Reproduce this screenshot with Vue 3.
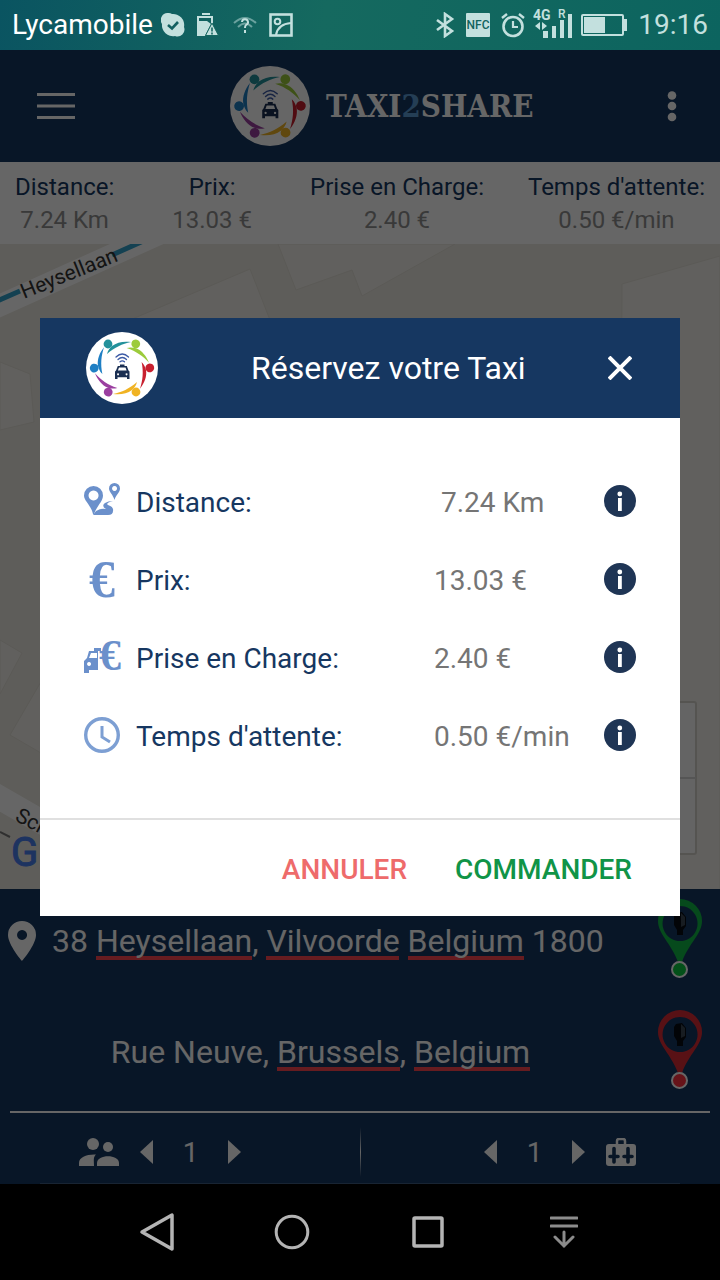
<script setup>
import { ref, onMounted } from 'vue';

// --- DONNÉES DE LA COURSE ---
const fares = [
    { id: 'distance', label: 'Distance:', value: '7.24 Km', detail: ' 7.24 Km' },
    { id: 'price', label: 'Prix:', value: '13.03 €', detail: '13.03 €' },
    { id: 'pickup', label: 'Prise en Charge:', value: '2.40 €', detail: '2.40 €' },
    { id: 'waiting', label: "Temps d'attente:", value: '0.50 €/min', detail: '0.50 €/min' },
];

const stops = ref([
    { id: 'from', label: 'Départ', text: '38 Heysellaan, Vilvoorde Belgium 1800', color: '#10b848', dot: '#08c840' },
    { id: 'to', label: 'Arrivée', text: 'Rue Neuve, Brussels, Belgium', color: '#dc2c36', dot: '#ff3040' },
]);

const UNKNOWN_WORDS = ['Heysellaan', 'Vilvoorde', 'Brussels', 'Belgium'];
const LOGO_COLORS = ['#23919b', '#9ccb3b', '#c8202f', '#f0b323', '#9b3fa0', '#1f7fc4'];

const passengers = ref(1);
const bags = ref(1);
const showModal = ref(true);

// --- SOULIGNEMENT DES MOTS INCONNUS ---
const inputs = ref([]);
const underlines = ref({});

const updateUnderlines = () => {
    const ctx = document.createElement('canvas').getContext('2d');
    stops.value.forEach((stop, i) => {
        const el = inputs.value[i];
        const css = getComputedStyle(el);
        ctx.font = `${css.fontSize} Roboto`;
        const total = ctx.measureText(stop.text).width;
        const start = css.textAlign === 'center' ? (el.clientWidth - total) / 2 : 0;
        const marks = UNKNOWN_WORDS.filter((w) => stop.text.includes(w)).map((w) => ({
            x: Math.round(start + ctx.measureText(stop.text.slice(0, stop.text.indexOf(w))).width),
            w: Math.round(ctx.measureText(w).width),
        }));
        underlines.value[stop.id] = {
            backgroundImage: marks.map(() => 'linear-gradient(#ff4650, #ff4650)').join(', ') || 'none',
            backgroundPosition: marks.map((m) => `${m.x}px 39px`).join(', '),
            backgroundSize: marks.map((m) => `${m.w}px 4px`).join(', '),
        };
    });
};

onMounted(() => {
    updateUnderlines();
    window.addEventListener('resize', updateUnderlines);
});
</script>

<template>
    <div class="screen">

        <!-- Symboles partagés -->
        <svg class="defs" aria-hidden="true">
            <symbol id="logo" viewBox="0 0 72 72">
                <circle cx="36" cy="36" r="36" fill="#fff" />
                <g v-for="(color, i) in LOGO_COLORS" :key="color" :fill="color" :transform="`rotate(${i * 60} 36 36)`">
                    <circle cx="22" cy="12" r="4.4" />
                    <path d="M21 22C22 18 24 16 26 14C31 10 38 9 45 10C36 12 29 15 21 22Z" />
                </g>
                <g fill="none" stroke="#3c5aa6" stroke-width="1.3" stroke-linecap="round">
                    <path d="M30 25Q36.300 19 42.500 25" />
                    <path d="M32 27.500Q36.300 23.500 40.500 27.500" />
                    <path d="M34 29.800Q36.300 28 38.500 29.800" />
                </g>
                <path fill="#1b2f52" fill-rule="evenodd"
                    d="M34 32.500h4.500v1.500h2.300l1.700 4.500l1 1V47h-2.500v-1.700h-9.500V47H29v-7.500l1-1l1.800-4.500H34zM33 35.600l-1.100 3h8.700l-1.100-3zM32 41.200a1 1 0 1 0 .1 0zM40.500 41.200a1 1 0 1 0 .1 0z" />
            </symbol>
        </svg>

        <div class="status-bar">
            <span>Lycamobile</span>
            <svg class="st-skype" width="24" height="24" viewBox="0 0 24 24">
                <path fill="currentColor" d="M7 0a7 7 0 0 1 4 1a11 11 0 0 1 12 13a7 7 0 0 1-9 9A11 11 0 0 1 1 11A7 7 0 0 1 7 0z" />
                <path d="M7 12l4 3.500l6-6.500" fill="none" stroke="#125f60" stroke-width="2.600" />
            </svg>
            <svg class="st-batwarn" width="22" height="24" viewBox="0 0 22 24">
                <path d="M5 1h8M1 23V4h14v7" fill="none" stroke="currentColor" stroke-width="2" />
                <path fill="currentColor" d="M1 8h9l4 3l-6 12H1z" />
                <path d="M15 10l6.500 12.500h-13z" fill="currentColor" stroke="#14665f" />
                <path d="M15 14.500v4M15 19.500v2" stroke="#14665f" stroke-width="1.600" />
            </svg>
            <svg class="st-wifi" width="24" height="20" viewBox="0 0 24 20">
                <g fill="none" stroke="currentColor" stroke-width="2" opacity=".5">
                    <path d="M1 8Q12-2 23 8M5 12Q12 5 19 12" />
                </g>
                <path d="M9 7a3 3 0 1 1 4 3q-1 .6-1 3M12 15v3" fill="none" stroke="currentColor" stroke-width="2" />
            </svg>
            <svg class="st-image" width="24" height="24" viewBox="0 0 24 24" fill="none" stroke="currentColor">
                <rect x="1.500" y="1.500" width="21" height="21" stroke-width="2.600" />
                <circle cx="8.500" cy="8.500" r="2.800" stroke-width="2" />
                <path d="M7 22Q9 11 22 10" stroke-width="2.200" />
            </svg>

            <div class="status-right">
                <svg width="20" height="26" viewBox="0 0 20 26">
                    <path d="M2 8l15 11l-7 5V2l7 5L2 18" fill="none" stroke="currentColor" stroke-width="2.600" />
                </svg>
                <svg width="24" height="24" viewBox="0 0 24 24">
                    <rect width="24" height="24" rx="1" fill="currentColor" />
                    <text x="12" y="16" text-anchor="middle" class="nfc">NFC</text>
                </svg>
                <svg width="24" height="26" viewBox="0 0 24 26" fill="none" stroke="currentColor">
                    <circle cx="12" cy="14.500" r="9.500" stroke-width="2.600" />
                    <path d="M12 9v6h5" stroke-width="2.200" />
                    <path d="M1 6l5-4M23 6l-5-4" stroke-width="2.400" />
                </svg>
                <svg class="st-signal" width="40" height="34" viewBox="0 0 40 34" fill="currentColor">
                    <text x="0" y="12" class="net">4G</text>
                    <text x="25" y="10" class="roaming">R</text>
                    <path d="M7 14v8l-5-4zM9 14v8l5-4zM10 23h5v7h-5zM19 18h4v12h-4zM27 12h4v18h-4zM35 6h4v24h-4z" />
                </svg>
                <svg width="46" height="24" viewBox="0 0 46 24">
                    <rect x="1" y="2" width="41" height="20" rx="1" fill="none" stroke="currentColor" stroke-width="2" />
                    <path d="M3 4h21v16H3zM43 6h3v12h-3z" fill="currentColor" />
                </svg>
                <span>19:16</span>
            </div>
        </div>

        <main class="app">
            <header class="app-header">
                <button class="icon-btn" aria-label="Menu">
                    <svg width="38" height="28" viewBox="0 0 38 28">
                        <path d="M0 2.500h38M0 14h38M0 25.500h38" stroke="#fff" stroke-width="3" />
                    </svg>
                </button>
                <div class="brand">
                    <svg width="80" height="80"><use href="#logo" /></svg>
                    <span class="brand-name">TAXI<span class="two">2</span>SHARE</span>
                </div>
                <button class="icon-btn more" aria-label="Options">
                    <svg width="10" height="34" viewBox="0 0 10 34" fill="#fff">
                        <circle cx="5" cy="6.500" r="4.300" />
                        <circle cx="5" cy="17" r="4.300" />
                        <circle cx="5" cy="28" r="4.300" />
                    </svg>
                </button>
            </header>

            <section class="stats">
                <div v-for="fare in fares" :key="fare.id" class="stat">
                    <span class="stat-label">{{ fare.label }}</span>
                    <span class="stat-value">{{ fare.value }}</span>
                </div>
            </section>

            <div class="map">
                <svg viewBox="0 0 720 645" preserveAspectRatio="xMinYMin slice">
                    <rect width="720" height="645" fill="#ebe8e0" />
                    <g fill="#f3f1ea" stroke="#e3e0d8">
                        <path d="M278 0L296 46L352 26L362 52L455 0z" />
                        <path d="M130 76L250 25L270 76L180 120z" />
                        <path d="M622 40L720 12V660H620z" />
                        <path d="M0 118L30 130L34 178L0 186z" />
                        <path d="M0 396L22 409L0 450z" />
                        <path d="M10 491L60 405V520z" />
                    </g>
                    <path d="M-10 66L190-24" stroke="#fff" stroke-width="22" />
                    <path d="M-10 60L20 47M112 11L150-6" stroke="#32a4cc" stroke-width="5" />
                    <path d="M-10 548L80 600" stroke="#fff" stroke-width="24" />
                    <path d="M0 588L10 593" stroke="#777" stroke-width="2" />
                    <text class="street" transform="translate(24 55) rotate(-22)">Heysellaan</text>
                    <text class="street" transform="translate(14 576) rotate(28)">Sch</text>
                    <text class="google" x="11" y="622">G</text>
                    <rect x="618" y="458" width="78" height="152" rx="2" fill="#fafafa" stroke="#d4d2cb" stroke-width="2" />
                    <path d="M618 534h78" stroke="#d4d4d4" stroke-width="2" />
                </svg>
            </div>

            <section class="trip">
                <div class="stops">
                    <div v-for="(stop, i) in stops" :key="stop.id" class="stop" :class="stop.id">
                        <svg v-if="i === 0" class="place" width="28" height="40" viewBox="0 0 28 40">
                            <path fill="#fff" fill-rule="evenodd"
                                d="M14 0a14 14 0 0 1 14 14c0 10-14 26-14 26S0 24 0 14A14 14 0 0 1 14 0zM14 9a5 5 0 1 0 .1 0z" />
                        </svg>
                        <input ref="inputs" v-model="stop.text" type="text" spellcheck="false" :aria-label="stop.label"
                            :style="underlines[stop.id]" @input="updateUnderlines">
                        <svg width="46" height="84" viewBox="0 2 46 84">
                            <path :fill="stop.color" fill-rule="evenodd"
                                d="M23 2a22 22 0 0 1 22 22c0 13-13 22-20 41h-4C14 46 1 37 1 24A22 22 0 0 1 23 2zM23 9a17.500 17.500 0 1 0 .1 0z" />
                            <path fill="#070b12" d="M19 16l6-1l4 5v9l-3 4v5h-6v-5l-3-5v-9z" />
                            <path fill="#3b4654" d="M24 16l4 4v8l-4 2z" />
                            <circle cx="22.500" cy="72.500" r="7.500" :fill="stop.dot" stroke="#fff" stroke-width="2" />
                        </svg>
                    </div>
                </div>

                <hr>

                <div class="counters">
                    <div class="counter">
                        <svg class="people" width="40" height="28" viewBox="0 0 40 28" fill="#fff">
                            <circle cx="14" cy="6" r="6" />
                            <circle cx="29" cy="9" r="5" />
                            <path d="M0 28v-3c0-6 8-9 17-8.500c-3 3-2 5-2 11.500z" />
                            <path d="M18 28v-3c0-9 22-9 22 0v3z" />
                        </svg>
                        <button class="icon-btn" aria-label="Moins de passagers" @click="passengers = Math.max(1, passengers - 1)">
                            <svg width="13" height="24" viewBox="0 0 13 24"><path d="M13 0v24L0 12z" fill="#fff" /></svg>
                        </button>
                        <span class="count">{{ passengers }}</span>
                        <button class="icon-btn" aria-label="Plus de passagers" @click="passengers++">
                            <svg width="13" height="24" viewBox="0 0 13 24"><path d="M0 0v24l13-12z" fill="#fff" /></svg>
                        </button>
                    </div>
                    <div class="separator"></div>
                    <div class="counter right">
                        <button class="icon-btn" aria-label="Moins de bagages" @click="bags = Math.max(0, bags - 1)">
                            <svg width="13" height="24" viewBox="0 0 13 24"><path d="M13 0v24L0 12z" fill="#fff" /></svg>
                        </button>
                        <span class="count">{{ bags }}</span>
                        <button class="icon-btn" aria-label="Plus de bagages" @click="bags++">
                            <svg width="13" height="24" viewBox="0 0 13 24"><path d="M0 0v24l13-12z" fill="#fff" /></svg>
                        </button>
                        <svg class="luggage" width="30" height="28" viewBox="0 0 30 28">
                            <path d="M11 7V3q0-2 2-2h4q2 0 2 2v4" fill="none" stroke="#fff" stroke-width="2.500" />
                            <rect y="6" width="30" height="22" rx="3" fill="#fff" />
                            <path d="M8 10.500v13.500M22 10.500v13.500M4 18.500h8M18 18.500h8" stroke="#14355d" stroke-width="3.600" stroke-linecap="round" />
                        </svg>
                    </div>
                </div>
            </section>

            <!-- Fenêtre de réservation -->
            <div v-if="showModal" class="overlay">
                <div class="modal" role="dialog" aria-labelledby="modal-title">
                    <div class="modal-header">
                        <svg width="72" height="72"><use href="#logo" /></svg>
                        <h1 id="modal-title">Réservez votre Taxi</h1>
                        <button class="icon-btn close" aria-label="Fermer" @click="showModal = false">
                            <svg width="24" height="24" viewBox="0 0 24 24">
                                <path d="M1 1l22 22M23 1L1 23" stroke="#fff" stroke-width="4" />
                            </svg>
                        </button>
                    </div>

                    <ul class="fare-list">
                        <li v-for="fare in fares" :key="fare.id" class="fare">
                            <svg v-if="fare.id === 'distance'" width="36" height="36" viewBox="0 0 36 36">
                                <path fill="#6b90cb" fill-rule="evenodd"
                                    d="M9.500 3a9.500 9.500 0 0 1 9.500 9.500c0 6-6 10-9 18.500h-1C7 22 0 18 0 12.500A9.500 9.500 0 0 1 9.500 3zM9.500 7.500a5 5 0 1 0 .1 0z" />
                                <path fill="#6b90cb" fill-rule="evenodd"
                                    d="M30.500 0a5.500 5.500 0 0 1 5.500 5.500c0 4-4 6-5.500 11.500C29 11.500 25 9 25 5.500A5.500 5.500 0 0 1 30.500 0zM30.500 3a2.500 2.500 0 1 0 .1 0z" />
                                <path fill="#6b90cb" d="M9 32l3-4q5-3 10-2q-5-3-1-6q3-2 8-2q-8 2-5 4q6 2 5 6q0 4-5 4z" />
                            </svg>
                            <svg v-else-if="fare.id === 'price'" width="36" height="36" viewBox="0 0 36 36">
                                <text x="18" y="36" text-anchor="middle" class="euro">€</text>
                            </svg>
                            <svg v-else-if="fare.id === 'pickup'" width="36" height="36" viewBox="0 0 36 36">
                                <path fill="#6b90cb" fill-rule="evenodd"
                                    d="M10 9h7v3h-3v8v11h-9v3H0V22l3-3l2-7h5zM7 14l-2 5h8v-5zM5 23a2 2 0 1 0 .1 0z" />
                                <text x="26" y="31" text-anchor="middle" class="euro small">€</text>
                            </svg>
                            <svg v-else width="36" height="36" viewBox="0 0 36 36" fill="none" stroke="#7d9fd3">
                                <circle cx="18" cy="18" r="16.300" stroke-width="3.400" />
                                <path d="M18 9v11l8 5" stroke-width="3" />
                            </svg>

                            <span class="fare-label">{{ fare.label }}</span>
                            <span class="fare-value">{{ fare.detail }}</span>
                            <button class="icon-btn" :aria-label="`Info ${fare.label}`">
                                <svg width="32" height="32" viewBox="0 0 32 32">
                                    <circle cx="16" cy="16" r="16" fill="#1f3555" />
                                    <circle cx="15.800" cy="9" r="2.400" fill="#fff" />
                                    <path d="M14 13h3.800v13H14z" fill="#fff" />
                                </svg>
                            </button>
                        </li>
                    </ul>

                    <div class="modal-footer">
                        <button class="btn-text cancel" @click="showModal = false">ANNULER</button>
                        <button class="btn-text confirm" @click="showModal = false">COMMANDER</button>
                    </div>
                </div>
            </div>
        </main>

        <nav class="nav-bar">
            <button class="nav-btn" aria-label="Retour">
                <svg width="36" height="40" viewBox="0 0 36 40">
                    <path d="M34 3v34L4 20z" stroke-width="3.500" stroke-linejoin="round" />
                </svg>
            </button>
            <button class="nav-btn" aria-label="Accueil">
                <svg width="36" height="36" viewBox="0 0 36 36"><circle cx="18" cy="18" r="15.800" stroke-width="3" /></svg>
            </button>
            <button class="nav-btn" aria-label="Applications">
                <svg width="32" height="32" viewBox="0 0 32 32"><rect x="2" y="2" width="28" height="28" rx="1" stroke-width="3.500" /></svg>
            </button>
            <button class="nav-btn" aria-label="Notifications">
                <svg width="28" height="34" viewBox="0 0 28 34" class="dim">
                    <path d="M1 3h26M1 11h26M14 17v14M5 22l9 9l9-9" stroke-width="3" stroke-linecap="round" />
                </svg>
            </button>
        </nav>
    </div>
</template>

<style>
body {
    margin: 0;
    background: #000;
}
</style>

<style scoped>
.screen {
    --navy: #163761;
    display: flex;
    flex-direction: column;
    min-height: 100vh;
    font-family: Roboto, "Liberation Sans", sans-serif;
}

.defs {
    position: absolute;
    width: 0;
    height: 0;
}

svg {
    display: block;
    flex-shrink: 0;
}

button {
    font-family: inherit;
    border: none;
    background: none;
    padding: 0;
    cursor: pointer;
}

/* BARRE D'ÉTAT */
.status-bar {
    display: flex;
    align-items: center;
    height: 50px;
    padding: 0 12px;
    background: linear-gradient(100deg, #0a5461 0%, #15695f 45%, #0c645f 100%);
    color: #c3e0de;
    font-size: 28px;
    line-height: 52px;
}

.status-bar > span {
    color: #fff;
}

.st-skype {
    margin-left: 8px;
}

.st-batwarn {
    margin-left: 12px;
}

.st-wifi {
    margin-left: 14px;
}

.st-image {
    margin-left: 12px;
}

.status-right {
    display: flex;
    align-items: center;
    gap: 11px;
    margin-left: auto;
}

.st-signal {
    margin: 0 -3px;
}

.nfc {
    font-size: 12px;
    font-weight: 500;
    fill: #12645f;
}

.net {
    font-size: 14px;
    font-weight: 700;
}

.roaming {
    font-size: 12px;
    font-weight: 500;
}

/* APPLICATION */
.app {
    position: relative;
    flex: 1;
    display: flex;
    flex-direction: column;
    background: var(--navy);
}

.app-header {
    display: flex;
    align-items: center;
    height: 112px;
    padding: 0 43px 0 37px;
    background: var(--navy);
}

.brand {
    display: flex;
    align-items: center;
    gap: 16px;
    margin-left: 155px;
}

.brand-name {
    font-family: "DejaVu Serif Condensed", "DejaVu Serif", serif;
    font-size: 31px;
    line-height: 32px;
    font-weight: 700;
    color: #fff;
}

.two {
    color: #5b9bd5;
}

.more {
    margin-left: auto;
}

.stats {
    display: grid;
    grid-template-columns: auto 1fr auto auto;
    column-gap: 44px;
    padding: 9px 15px 7px;
    background: #fff;
    font-size: 24px;
    line-height: 33px;
    text-align: center;
}

.stat {
    display: flex;
    flex-direction: column;
}

.stat-label {
    color: var(--navy);
}

.stat-value {
    color: #909090;
}

.map {
    flex: 1;
    min-height: 320px;
    display: flex;
    overflow: hidden;
}

.map svg {
    flex: 1;
    width: 100%;
    min-height: 0;
}

.street {
    font-size: 21px;
    fill: #333;
}

.google {
    font-size: 40px;
    fill: #4a80f0;
    stroke: #4a80f0;
}

/* TRAJET */
.trip {
    background: var(--navy);
}

.stops {
    display: flex;
    flex-direction: column;
    gap: 7px;
}

.stop {
    display: flex;
    align-items: center;
    gap: 16px;
    height: 104px;
    padding-right: 17px;
}

.place {
    margin-left: 8px;
}

.stop input {
    flex: 1;
    min-width: 0;
    height: 48px;
    padding: 0;
    border: none;
    outline: none;
    background-color: transparent;
    background-repeat: no-repeat;
    font-family: inherit;
    font-size: 32px;
    color: #fff;
}

.stop.to input {
    text-align: center;
}

hr {
    height: 2px;
    margin: 7px 10px 0;
    border: none;
    background: #fff;
}

.counters {
    display: grid;
    grid-template-columns: 1fr 1px 1fr;
    align-items: center;
    box-sizing: border-box;
    height: 71px;
    margin: 0 40px;
    padding-top: 8px;
    border-bottom: 1px solid #3d5a80;
}

.counter {
    display: flex;
    align-items: center;
    padding: 0 39px;
    color: #fff;
}

.counter.right {
    justify-content: flex-end;
    padding: 0 44px;
}

.people {
    margin-right: 21px;
}

.luggage {
    margin-left: 21px;
}

.count {
    width: 75px;
    text-align: center;
    font-size: 28px;
}

.separator {
    height: 50px;
    background: linear-gradient(transparent, #fff, transparent);
}

/* FENÊTRE */
.overlay {
    position: absolute;
    inset: 0;
    display: flex;
    align-items: center;
    justify-content: center;
    padding: 0 40px;
    background: rgba(0, 0, 0, 0.6);
}

.modal {
    flex: 1;
    background: #fff;
}

.modal-header {
    display: flex;
    align-items: center;
    height: 100px;
    padding: 0 48px 0 46px;
    background: var(--navy);
}

.modal-header h1 {
    margin: 0 0 0 93px;
    font-size: 32px;
    font-weight: 400;
    color: #fff;
}

.close {
    margin-left: auto;
}

.fare-list {
    list-style: none;
    margin: 0;
    padding: 44px;
}

.fare {
    display: grid;
    grid-template-columns: 36px 1fr 154px 32px;
    column-gap: 16px;
    align-items: center;
    height: 78px;
    font-size: 28px;
}

.fare svg {
    overflow: visible;
}

.fare-label,
.fare-value {
    padding-top: 2px;
}

.fare-label {
    color: var(--navy);
}

.fare-value {
    white-space: pre;
    color: #757575;
}

.euro {
    font-family: "Liberation Serif", serif;
    font-weight: 700;
    font-size: 52px;
    fill: #6b90cb;
}

.euro.small {
    font-size: 44px;
}

.modal-footer {
    display: flex;
    align-items: center;
    justify-content: flex-end;
    gap: 48px;
    height: 96px;
    padding-right: 48px;
    border-top: 2px solid #e0e0e0;
}

.btn-text {
    padding-top: 2px;
    font-size: 28px;
    font-weight: 500;
}

.cancel {
    color: #ee6b6b;
}

.confirm {
    color: #109447;
}

/* NAVIGATION SYSTÈME */
.nav-bar {
    display: flex;
    justify-content: center;
    height: 96px;
    background: #000;
}

.nav-btn {
    display: flex;
    align-items: center;
    justify-content: center;
    width: 136px;
}

.nav-btn svg {
    fill: none;
    stroke: #b4b4b4;
}

.nav-btn .dim {
    stroke: #8c8c8c;
}
</style>
